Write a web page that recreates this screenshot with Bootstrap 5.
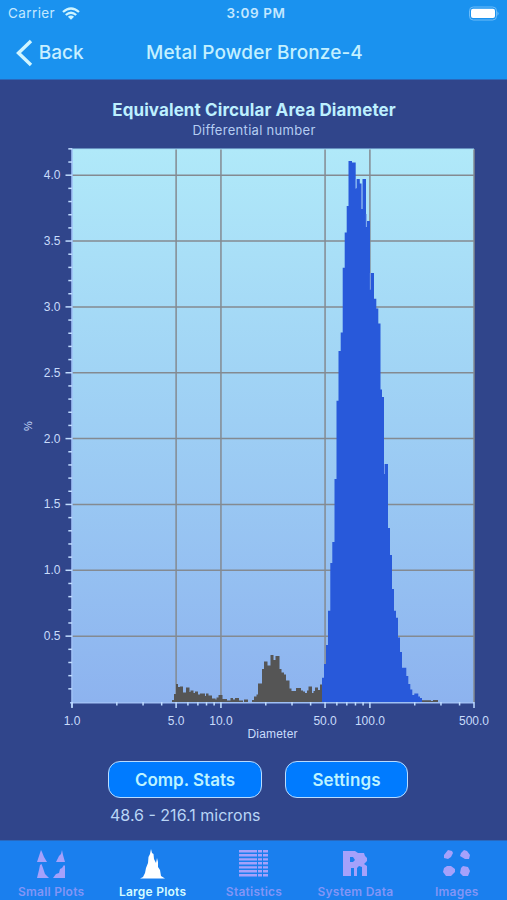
<!DOCTYPE html>
<html lang="en">
<head>
<meta charset="utf-8">
<meta name="viewport" content="width=device-width, initial-scale=1">
<title>Metal Powder Bronze-4</title>
<link href="https://cdn.jsdelivr.net/npm/bootstrap@5.3.0/dist/css/bootstrap.min.css" rel="stylesheet">
<style>
body{background:#30458b;font-family:Inter,"Liberation Sans",sans-serif;color:#c3e8ff;width:507px;height:900px;overflow:hidden}
svg{display:block}
.app-top{height:80px;background:#1a92ef;border-bottom:1px solid #2968bd}
.status-line{height:27px;font-size:13px;line-height:27px}
.side{width:150px}
.carrier{font-size:13.5px;letter-spacing:.4px;margin-right:7px}
.clock{font-weight:600;font-size:13.5px;letter-spacing:.6px;padding-left:5px}
.title-line{height:52px;font-size:19px;line-height:52px}
.back-link{color:#c8efff;text-decoration:none;width:100px;font-weight:500}
.page-title{font-weight:500;letter-spacing:.1px;color:#c3f0ff;padding-left:2px}
.chart-head{padding:20px 0 0 1px;height:68px}
.chart-title{font-size:17px;line-height:21px;font-weight:700;letter-spacing:.1px;color:#bdf0ff}
.chart-sub{font-size:13px;line-height:19px;letter-spacing:.3px;color:#b5cdf2}
.plot text{font-family:"Liberation Sans",sans-serif;font-size:12px;fill:#c9dcfb}
.actions{padding:0 99px 0 108px;margin-top:9px}
.btn.pill{height:37px;padding:0;border:1.5px solid #b9dcff;border-radius:12px;background:#007bff;color:#bdf3ff;font-size:17px;font-weight:600;line-height:34px}
.pill-a{width:154px}.pill-b{width:123px;letter-spacing:.1px}
.range-text{font-size:16px;line-height:20px;margin:7px 0 0 110px;color:#b9d5f6}
.tabs{height:60px;background:#1a7fee;border-top:1px solid #2868bf}
.tabs a{color:#8295f6;font-size:12px;font-weight:600;line-height:14px;text-decoration:none;letter-spacing:.24px;padding:5px 0 0 1px}
.tabs a.on{color:#d5fbff}
.tabs svg{width:36px;height:36px;fill:#a5a1fb;margin-bottom:3px}
.tabs a.on svg{fill:#fff}
</style>
<script src="https://cdn.jsdelivr.net/npm/bootstrap@5.3.0/dist/js/bootstrap.bundle.min.js"></script>
</head>
<body class="d-flex flex-column">
<header class="app-top">
  <div class="status-line d-flex justify-content-between">
    <div class="side d-flex align-items-center ps-2"><span class="carrier">Carrier</span>
      <svg width="18" height="14" viewBox="0 0 18 14" fill="none" stroke="#cdf4ff" stroke-width="2.3"><path d="M1 5Q9-2 17 5M3.8 8Q9 3.4 14.2 8"/><path d="M9 12.8 5.9 9.8Q9 7.2 12.1 9.8Z" fill="#cdf4ff" stroke="none"/></svg>
    </div>
    <span class="clock">3:09 PM</span>
    <div class="side d-flex align-items-center justify-content-end pe-2">
      <svg width="33" height="15" viewBox="0 0 33 15"><rect x="3.5" y="1" width="27" height="13" rx="3.8" fill="none" stroke="#6dbcf8"/><rect x="5" y="2.7" width="24" height="9.3" rx="2" fill="#fff"/><path d="M31.5 5.2q2 2.3 0 4.6z" fill="#7bc5fa"/></svg>
    </div>
  </div>
  <nav class="title-line d-flex justify-content-between">
    <a href="#" class="back-link d-flex align-items-center"><svg class="ms-3" width="17" height="28" viewBox="0 0 17 28" fill="none" stroke="#d0f5ff" stroke-width="3.4"><path d="M15 2 2.5 14 15 26"/></svg><span class="ms-1">&#8202;Back</span></a>
    <span class="page-title">Metal Powder Bronze-4</span>
    <span class="back-link"></span>
  </nav>
</header>
<main class="flex-grow-1">
  <div class="chart-head text-center">
    <div class="chart-title">Equivalent Circular Area Diameter</div>
    <div class="chart-sub">Differential number</div>
  </div>
  <svg class="plot" width="507" height="604" viewBox="0 148 507 604" id="plot">
    <defs><linearGradient id="sky" x1="0" y1="0" x2="0" y2="1"><stop offset="0" stop-color="#b0e9f9"/><stop offset=".4" stop-color="#a1d4f5"/><stop offset="1" stop-color="#8db3ef"/></linearGradient></defs>
    <rect x="72" y="149" width="402" height="553.5" fill="url(#sky)"/>
    <g id="grid" stroke="#848a91" stroke-width="1.5"></g>
    <path fill="#555" d="M172 702V700H174V694H176V684H178V687H180V686.500H183V692.500H186V687.500H189.500V692H190.500V690.500H193.500V693H195V691.500H198V694.500H200V693.500H205V696H206V693.500H208.500V695.500H212V698.500H215.500V699.500H216.500V697.500H218.500V695H222.500V699H227V700.500H230.500V698H233V699.500H235V698H239V700.500H243V702H244V699.500H248V702H252V700H254V696.500H256.500V694.500H258V683.500H262V669H264V661.500H267.500V665.500H270.500V655H273.500V660H275.500V656H279.500V669H281.500V672.500H284V674.500H286V680.500H289.500V688.500H291.500V691H296V688H301V690.500H303V691.500H305V693H307V690.500H308.500V686.500H312V693H313.500V691H315V687.500H318V690H320V684.500H323V702ZM422 702V700.300H431V701H433V700H438V702Z"/>
    <path fill="#2859da" d="M322 702V677.700H324V664H326V645H328V610.700H330.300V563H332.300V542H334.500V479H336.500V400.700H338.500V351H340.700V332.500H342.700V267.700H344.700V232.500H346.700V206H348.500V161H352V162.500H355.700V188H356.700V179H359.800V183.500H361.500V209H362.500V179H366V227H367V221H370V289H371V273H374V298.700H376.300V308.500H378.300V323.500H380.500V389.500H382V397H384V474H385V464H388V528H390V555H392V589H394V610.700H396V617.700H398V637.500H400V652H402V667.700H406.300V676H408.300V684H410.300V689.500H412.300V695H414.300V693.500H418.300V696.500H420V698H422V702Z"/>
    <path d="M355.900 179V189M361.600 184V209M370.300 273V290M384.500 464V474M366.300 214V227" stroke="#6f94ea" stroke-width=".9"/>
    <path d="M72 149H474" stroke="#9fdcf4" stroke-width="1"/>
    <path d="M72 148.500V707.500M70 702.700H474" stroke="#9fc0f5" stroke-width="1.6" fill="none"/>
    <g id="ticks" stroke="#c0dcff" stroke-width="1.5"></g>
    <g id="labels"></g>
    <text x="272.500" y="738" text-anchor="middle" textLength="50">Diameter</text>
    <text transform="translate(32 426) rotate(-90)" text-anchor="middle" style="font-size:11px">%</text>
  </svg>
  <div class="actions d-flex justify-content-between">
    <button class="btn pill pill-a" type="button">Comp. Stats</button>
    <button class="btn pill pill-b" type="button">Settings</button>
  </div>
  <div class="range-text">48.6 - 216.1 microns</div>
</main>
<footer class="tabs d-flex">
  <a href="#" class="col d-flex flex-column align-items-center"><svg viewBox="0 0 36 36"><path d="M4 16 7 7 8 4 9 6 11 11 14 16ZM23 16 26 10 28 8 29 4 30 9 32 16ZM4 32 6 24 7 19 8.500 18 10 22 12 28 16 32ZM20 32 23 28 26 27 27 23 29 22 31 19 32 20V32Z"/></svg>Small Plots</a>
  <a href="#" class="on col d-flex flex-column align-items-center"><svg viewBox="0 0 36 36"><path d="M5 32.500 8 31 10 27 11 22 13 17 13.500 11 15 8 16 3 17 7 18.500 8 19 13 21 17 22 12 23 16V21L25 24 26 30 30 32.500Z"/></svg>Large Plots</a>
  <a href="#" class="col d-flex flex-column align-items-center"><svg viewBox="1 0 36 36"><path d="M4 4H22V6.500H4ZM4 8H22V10.500H4ZM4 12.200H22V14.500H4ZM4 16H22V18.500H4ZM4 20.200H22V22.500H4ZM4 24H22V26.500H4ZM4 28H22V30.500H4ZM23 4h4v2.500h-4zM23 8h4v2.500h-4zM23 12.200h4v2.300h-4zM23 16h4v2.500h-4zM23 20.200h4v2.300h-4zM23 24h4v2.500h-4zM23 28h4v2.500h-4zM28 4h5v2.500h-5zM28 8h5v2.500h-5zM28 12.200h5v2.300h-5zM28 16h5v2.500h-5zM28 20.200h5v2.300h-5zM28 24h5v2.500h-5zM28 28h5v2.500h-5z"/></svg>Statistics</a>
  <a href="#" class="col d-flex flex-column align-items-center"><svg viewBox="0 0 36 36"><path fill-rule="evenodd" d="M6 5H18L21 7H27L28 10 30 12V15L27 18 30 20V30H25V21L22 20 20 22V30H17V22L14 22V30H6ZM13 11V16L16 16 18 14 16 11Z"/></svg>System Data</a>
  <a href="#" class="col d-flex flex-column align-items-center"><svg viewBox="0 0 36 36"><path d="M9 4 13 5 14 7 12 11 9 13 5 12 5 9ZM25 4 28 5 31 9 30 13 26 13 21 10 22 7ZM8 20 12 20 16 23 16 26 12 30 7 30 4 26 5 22ZM24 20 29 21 31 25 29 30 24 30 21 27 22 22Z"/></svg>Images</a>
</footer>
<script>
const NS='http://www.w3.org/2000/svg';
const px=v=>72+148.95*Math.log10(v), py=v=>702-131.7*v;
const path=(id,d)=>{const e=document.createElementNS(NS,'path');e.setAttribute('d',d);document.getElementById(id).append(e)};
const label=(s,x,y,a)=>{const e=document.createElementNS(NS,'text');e.setAttribute('x',x);e.setAttribute('y',y);e.setAttribute('text-anchor',a);e.textContent=s;document.getElementById('labels').append(e)};
for(let i=1;i<=42;i++){const y=py(i/10),major=i%5===0;
  path('ticks',`M${major?65.5:68.300} ${y}H72`);
  if(major){path('grid',`M72 ${y}H474`);label((i/10).toFixed(1),60.5,y+4,'end')}}
for(const v of [5,10,50,100,500])path('grid',`M${px(v)} 149V702`);
for(const v of [1,2,3,4,5,6,7,8,9,10,20,30,40,50,60,70,80,90,100,200,300,400,500]){
  const major=[1,5,10,50,100,500].includes(v);
  path('ticks',`M${px(v)} 702V${major?708:705.500}`);
  if(major)label(v.toFixed(1),px(v),724.5,'middle')}
</script>
</body>
</html>
